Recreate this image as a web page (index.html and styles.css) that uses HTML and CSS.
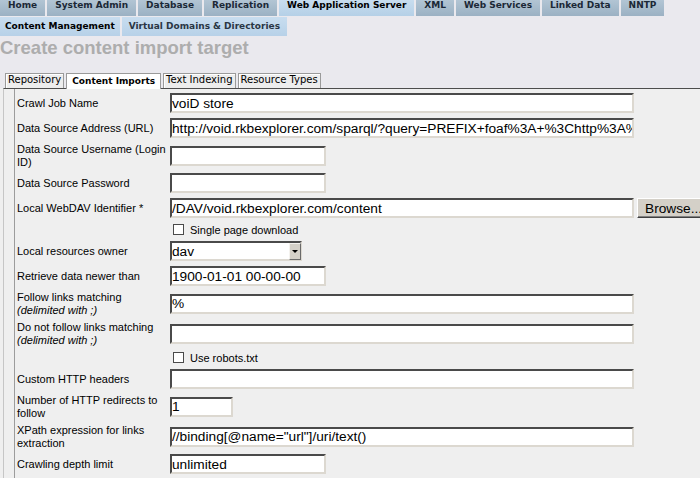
FILE: index.html
```html
<!DOCTYPE html>
<html lang="en">
<head>
  <meta charset="UTF-8">
  <title>Create content import target</title>
  <link rel="stylesheet" href="styles.css">
</head>
<body>

  <div class="top">
    <!-- main menu -->
    <div class="nav-row">
      <a class="nav-tab">Home</a>
      <a class="nav-tab">System Admin</a>
      <a class="nav-tab">Database</a>
      <a class="nav-tab">Replication</a>
      <a class="nav-tab current">Web Application Server</a>
      <a class="nav-tab">XML</a>
      <a class="nav-tab">Web Services</a>
      <a class="nav-tab">Linked Data</a>
      <a class="nav-tab">NNTP</a>
    </div>
    <div class="nav-row sub">
      <a class="nav-tab strong">Content Management</a>
      <a class="nav-tab">Virtual Domains &amp; Directories</a>
    </div>

    <h1 class="page-title">Create content import target</h1>

    <div class="tabs">
      <span class="tab">Repository</span>
      <span class="tab active">Content Imports</span>
      <span class="tab">Text Indexing</span>
      <span class="tab">Resource Types</span>
    </div>
  </div>

  <div class="panel">
    <form class="form">
      <label class="lbl">Crawl Job Name</label>
      <div class="fld"><input class="txt wide" type="text" value="voiD store"></div>

      <label class="lbl">Data Source Address (URL)</label>
      <div class="fld"><input class="txt wide" type="text" value="http://void.rkbexplorer.com/sparql/?query=PREFIX+foaf%3A+%3Chttp%3A%2F%2Fxmlns.com"></div>

      <label class="lbl">Data Source Username (Login ID)</label>
      <div class="fld"><input class="txt short" type="text"></div>

      <label class="lbl">Data Source Password</label>
      <div class="fld"><input class="txt short" type="password"></div>

      <label class="lbl">Local WebDAV Identifier *</label>
      <div class="fld">
        <input class="txt wide" type="text" value="/DAV/void.rkbexplorer.com/content">
        <button class="btn" type="button">Browse...</button>
      </div>

      <span class="lbl"></span>
      <div class="fld check"><input class="cb" type="checkbox" id="single"><label for="single">Single page download</label></div>

      <label class="lbl">Local resources owner</label>
      <div class="fld">
        <div class="sel">
          <select><option>dav</option></select>
          <span class="sel-btn"></span>
        </div>
      </div>

      <label class="lbl">Retrieve data newer than</label>
      <div class="fld"><input class="txt short" type="text" value="1900-01-01 00-00-00"></div>

      <label class="lbl">Follow links matching<br><em>(delimited with ;)</em></label>
      <div class="fld"><input class="txt wide" type="text" value="%"></div>

      <label class="lbl">Do not follow links matching<br><em>(delimited with ;)</em></label>
      <div class="fld"><input class="txt wide" type="text"></div>

      <span class="lbl"></span>
      <div class="fld check"><input class="cb" type="checkbox" id="robots"><label for="robots">Use robots.txt</label></div>

      <label class="lbl">Custom HTTP headers</label>
      <div class="fld"><input class="txt wide" type="text"></div>

      <label class="lbl">Number of HTTP redirects to follow</label>
      <div class="fld"><input class="txt tiny" type="text" value="1"></div>

      <label class="lbl">XPath expression for links extraction</label>
      <div class="fld"><input class="txt wide" type="text" value="//binding[@name=&quot;url&quot;]/uri/text()"></div>

      <label class="lbl">Crawling depth limit</label>
      <div class="fld"><input class="txt short" type="text" value="unlimited"></div>
    </form>
  </div>

</body>
</html>
```

FILE: styles.css
```css
* {
  box-sizing: border-box;
}
html, body {
  margin: 0;
  height: 100%;
  overflow: hidden;
}
body {
  background: #efefef;
  color: #000;
  font-family: "Liberation Sans", Arial, sans-serif;
  font-size: 11px;
}

.top {
  background: #eae9ee;
}

/* main menu */
.nav-row {
  display: flex;
  gap: 2px;
}
.nav-tab {
  height: 16px;
  line-height: 16px;
  padding: 0 8px;
  font: bold 9px "DejaVu Sans", Verdana, sans-serif;
  color: #1b2836;
  background: linear-gradient(#b2c5d4, #9bb1c3);
  text-decoration: none;
  white-space: nowrap;
}
.nav-tab.current {
  background: linear-gradient(#c8ddef, #b5d0e7);
  color: #000;
}
.nav-row.sub {
  margin-top: 1px;
}
.nav-row.sub .nav-tab {
  height: 19px;
  line-height: 19px;
  padding: 0 7px;
  background: linear-gradient(#c8ddef, #b7d1e8);
  color: #2a3644;
}
.nav-row.sub .nav-tab.strong {
  padding: 0 5px;
  color: #000;
}

.page-title {
  margin: 1px 0 0;
  font: bold 18.5px/21px "Liberation Sans", Arial, sans-serif;
  color: #adadad;
}

/* page tabs */
.tabs {
  display: flex;
  align-items: flex-end;
  gap: 2px;
  margin-top: 15px;
  padding-left: 5px;
}
.tab {
  height: 15px;
  line-height: 13px;
  padding: 0 2px;
  font: 10px "DejaVu Sans", Verdana, sans-serif;
  background: #ededed;
  border: 1px solid #9a9a9a;
  border-bottom: none;
  box-shadow: inset 1px 1px 0 #fff;
  white-space: nowrap;
}
.tab.active {
  position: relative;
  height: 16px;
  margin-bottom: -1px;
  padding: 0 5px;
  font-weight: bold;
  font-size: 9px;
  line-height: 15px;
  background: #fff;
  box-shadow: none;
}

.panel {
  margin-left: 3px;
  border-top: 1px solid #4d4d4d;
  border-left: 1px solid #c6c6c6;
  background: #efefef;
  height: 100%;
}

.form {
  display: grid;
  grid-template-columns: 155px 1fr;
  row-gap: 1px;
  align-items: center;
  margin: 0 0 0 10px;
  padding-top: 2px;
  border-left: 1px solid #9c9c9c;
  height: 100%;
  align-content: start;
}
.lbl {
  padding: 1.5px 2px;
  line-height: 13px;
}
.fld {
  display: flex;
  align-items: center;
  padding: 2px 0;
  white-space: nowrap;
  min-width: 0;
}
.fld.check {
  height: 17px;
}

.txt {
  height: 20px;
  margin: 0;
  padding: 0;
  border: 2px solid;
  border-color: #4a4a4a #dcd8d0 #dcd8d0 #4a4a4a;
  background: #fff;
  color: #000;
  font: 13.7px "Liberation Sans", Arial, sans-serif;
  outline: none;
  flex-shrink: 0;
}
.wide { width: 464px; }
.short { width: 156px; }
.tiny { width: 63px; }

.btn {
  flex-shrink: 0;
  height: 20px;
  margin: 0 0 0 3px;
  padding: 0 7px;
  font: 13.7px "Liberation Sans", Arial, sans-serif;
  color: #000;
  background: #d4d0c8;
  border: 1px solid;
  border-color: #fff #404040 #404040 #fff;
  box-shadow: inset -1px -1px 0 #808080;
}

.cb {
  appearance: none;
  width: 11px;
  height: 11px;
  margin: 0 6px 0 3px;
  border: 1px solid #4a4a4a;
  background: #fff;
}

.sel {
  position: relative;
  width: 132px;
  height: 20px;
}
.sel select {
  appearance: none;
  width: 100%;
  height: 100%;
  margin: 0;
  padding: 0;
  border: 2px solid;
  border-color: #4a4a4a #dcd8d0 #dcd8d0 #4a4a4a;
  border-radius: 0;
  background: #fff;
  font: 13.7px "Liberation Sans", Arial, sans-serif;
  color: #000;
}
.sel-btn {
  position: absolute;
  top: 2px;
  right: 1px;
  bottom: 1px;
  width: 12px;
  background: #d4d0c8;
  border: 1px solid;
  border-color: #f4f2ee #6a6a6a #6a6a6a #f4f2ee;
}
.sel-btn::after {
  content: "";
  position: absolute;
  left: 2px;
  top: 6px;
  border-left: 3px solid transparent;
  border-right: 3px solid transparent;
  border-top: 3px solid #000;
}
```
